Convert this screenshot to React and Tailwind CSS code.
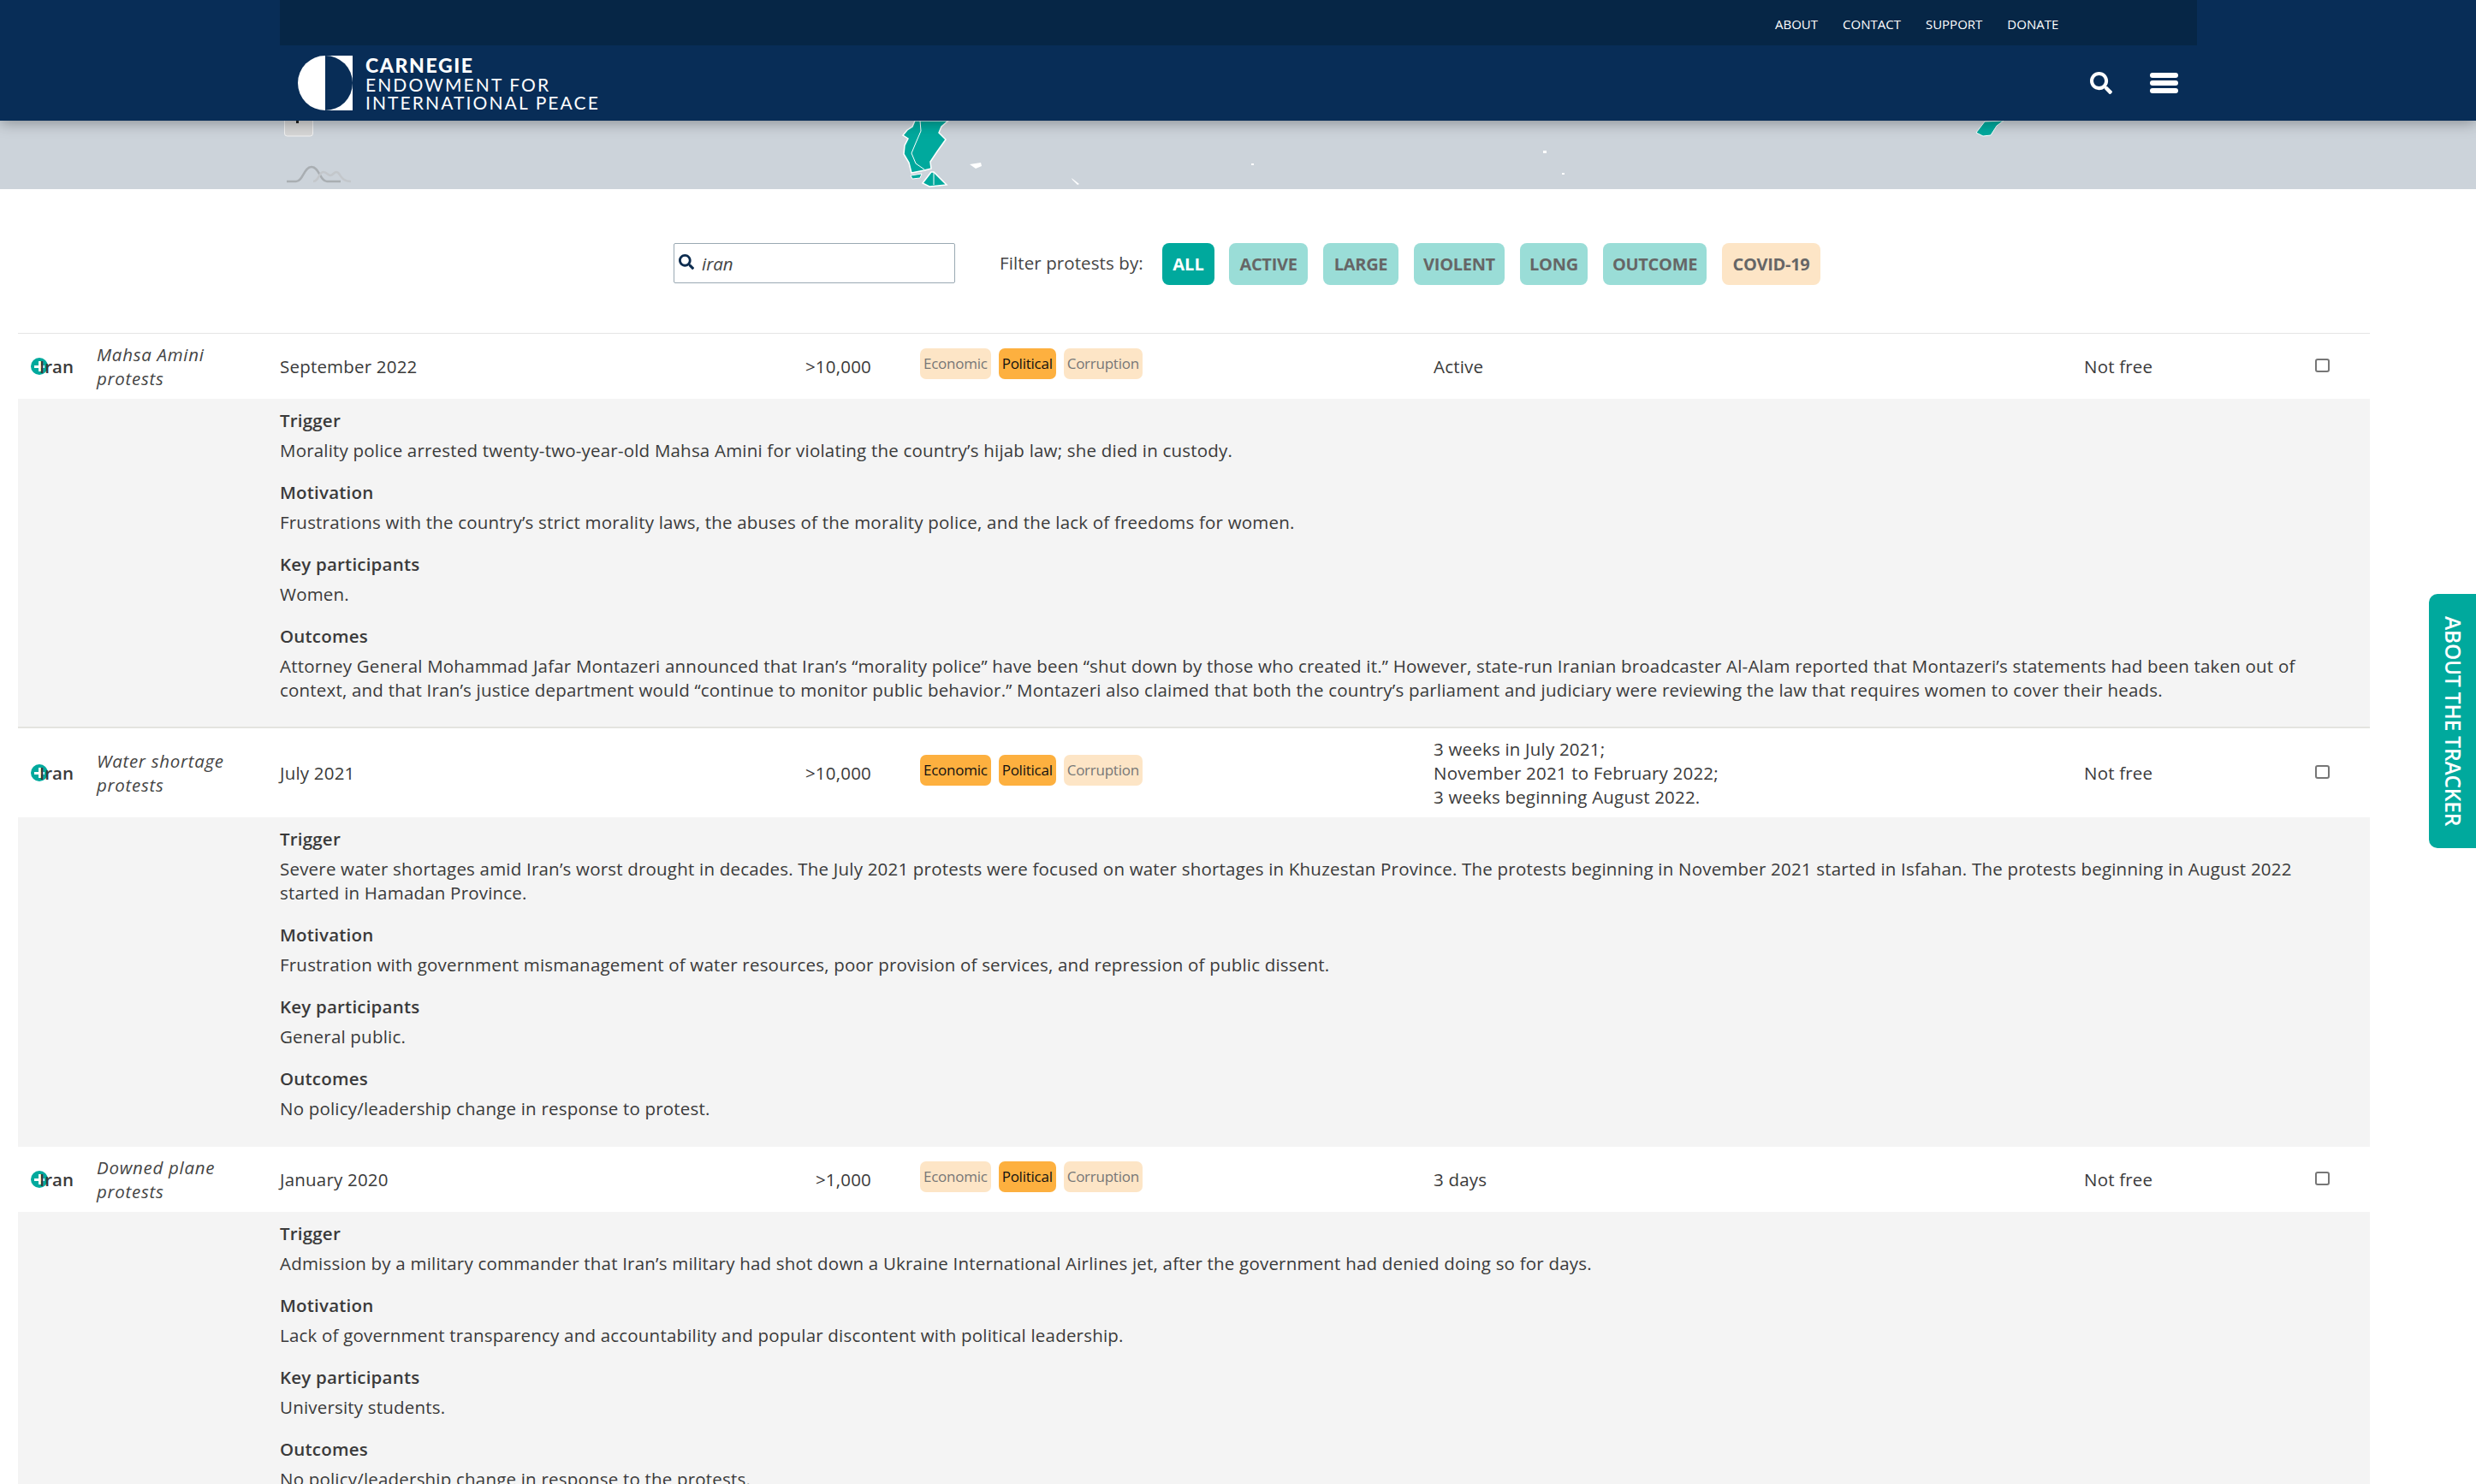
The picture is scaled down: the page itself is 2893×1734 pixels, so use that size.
import { FaSearch } from 'react-icons/fa'

const NAV = ['About', 'Contact', 'Support', 'Donate']
const FILTERS = [
  { label: 'ACTIVE', cls: 'w-[92px]' },
  { label: 'LARGE', cls: 'w-[88px]' },
  { label: 'VIOLENT', cls: 'w-[106px]' },
  { label: 'LONG', cls: 'w-[79px]' },
  { label: 'OUTCOME', cls: 'w-[121px]' },
]

const PROTESTS = [
  {
    name: 'Mahsa Amini protests',
    date: 'September 2022',
    size: '>10,000',
    on: ['Political'],
    status: ['Active'],
    details: [
      ['Trigger', 'Morality police arrested twenty-two-year-old Mahsa Amini for violating the country’s hijab law; she died in custody.'],
      ['Motivation', 'Frustrations with the country’s strict morality laws, the abuses of the morality police, and the lack of freedoms for women.'],
      ['Key participants', 'Women.'],
      ['Outcomes', 'Attorney General Mohammad Jafar Montazeri announced that Iran’s “morality police” have been “shut down by those who created it.” However, state-run Iranian broadcaster Al-Alam reported that Montazeri’s statements had been taken out of context, and that Iran’s justice department would “continue to monitor public behavior.” Montazeri also claimed that both the country’s parliament and judiciary were reviewing the law that requires women to cover their heads.'],
    ],
  },
  {
    name: 'Water shortage protests',
    date: 'July 2021',
    size: '>10,000',
    on: ['Economic', 'Political'],
    status: ['3 weeks in July 2021;', 'November 2021 to February 2022;', '3 weeks beginning August 2022.'],
    details: [
      ['Trigger', 'Severe water shortages amid Iran’s worst drought in decades. The July 2021 protests were focused on water shortages in Khuzestan Province. The protests beginning in November 2021 started in Isfahan. The protests beginning in August 2022 started in Hamadan Province.'],
      ['Motivation', 'Frustration with government mismanagement of water resources, poor provision of services, and repression of public dissent.'],
      ['Key participants', 'General public.'],
      ['Outcomes', 'No policy/leadership change in response to protest.'],
    ],
  },
  {
    name: 'Downed plane protests',
    date: 'January 2020',
    size: '>1,000',
    on: ['Political'],
    status: ['3 days'],
    details: [
      ['Trigger', 'Admission by a military commander that Iran’s military had shot down a Ukraine International Airlines jet, after the government had denied doing so for days.'],
      ['Motivation', 'Lack of government transparency and accountability and popular discontent with political leadership.'],
      ['Key participants', 'University students.'],
      ['Outcomes', 'No policy/leadership change in response to the protests.'],
    ],
  },
]

function Logo() {
  return (
    <svg width="64" height="64" viewBox="0 0 64 64" className="shrink-0">
      <rect x="32" y="0" width="32" height="64" fill="#fff" />
      <path d="M32 0A32 32 0 0 0 32 64Z" fill="#fff" />
      <path d="M32 0A32 32 0 0 1 32 64Z" fill="#082d57" />
    </svg>
  )
}

function Bars() {
  return (
    <svg width="33" height="24" viewBox="0 0 33 24">
      <rect x="0" y="0" width="33" height="6" rx="3" fill="#fff" />
      <rect x="0" y="9" width="33" height="6" rx="3" fill="#fff" />
      <rect x="0" y="18" width="33" height="6" rx="3" fill="#fff" />
    </svg>
  )
}

function MapStrip() {
  return (
    <div className="h-[80px] bg-[#ccd3da]">
      <svg width="2893" height="80" viewBox="0 0 2893 80" className="block">
        <rect x="332.5" y="-8" width="33" height="26" rx="3" fill="#d6d6d6" stroke="#f2f2f2" strokeWidth="1" />
        <rect x="346" y="0" width="3" height="3" fill="#222" />
        <path d="M335 71H346C354 71 355 54 364 54C373 54 374 71 382 71H398" fill="none" stroke="#a9aeb2" strokeWidth="2.5" />
        <path d="M366 71C373 71 372 60 378 60C382 60 383 64 386 64C389 64 390 60 393 60C398 60 397 71 410 71" fill="none" stroke="#c3c7cb" strokeWidth="2.5" />
        <path d="M1069 0L1066 7L1060 11L1055 17L1061 21L1057 29L1056 39L1062 49L1065 61L1080 58L1088 56L1087 48L1095 36L1105 22L1097 14L1100 7L1108 0Z" fill="#00a99d" stroke="#fff" strokeWidth="1.5" />
        <path d="M1075 0L1076 12L1070 26L1065 38L1070 50L1080 57" fill="none" stroke="#fff" strokeWidth="1" />
        <path d="M1064 64L1077 62L1075 67L1066 68Z" fill="#00a99d" stroke="#fff" strokeWidth="1" />
        <path d="M1078 73L1088 60L1091 60L1106 75L1086 77Z" fill="#00a99d" stroke="#fff" strokeWidth="1.5" />
        <path d="M1091 60V75" stroke="#fff" strokeWidth="1" />
        <path d="M1133 51L1146 49L1147 53L1140 56Z" fill="#fff" />
        <path d="M1252 67L1261 74L1259 75L1253 69Z" fill="#fff" />
        <rect x="1462" y="50" width="3" height="2" fill="#fff" />
        <rect x="1803" y="35" width="4" height="3" fill="#fff" />
        <rect x="1825" y="61" width="3" height="2" fill="#fff" />
        <path d="M2309 14L2319 1L2341 0L2333 6L2326 17L2317 18Z" fill="#00a99d" stroke="#fff" strokeWidth="1" />
      </svg>
    </div>
  )
}

function Tag({ label, on }) {
  const cls = on ? 'bg-[#fdb03f] text-[#111]' : 'bg-[#fde5c6] text-[#777]'
  return <span className={`h-[36px] px-[4px] rounded-[7px] flex items-center text-[17px] tracking-[-0.25px] ${cls}`}>{label}</span>
}

function Protest({ item, first }) {
  return (
    <div>
      <div className={`grid grid-cols-[92px_214px_691px_657px_760px_270px_64px] items-center py-[10px] bg-white text-[20.5px] leading-[28px] tracking-[0.2px] text-[#3a3a3a] ${first ? 'border-t border-[#e5e5e5]' : ''}`}>
        <div className="relative pl-[25px] font-semibold tracking-normal">
          <span className="absolute left-[15px] top-[4px] w-[20px] h-[20px] rounded-full bg-[#00a99d] flex items-center justify-center">
            <span className="absolute w-[12px] h-[3px] bg-white" />
            <span className="absolute w-[3px] h-[12px] bg-white" />
          </span>
          <span className="relative">Iran</span>
        </div>
        <div className="italic text-[#444] tracking-[0.7px] pr-[40px]">{item.name}</div>
        <div className="flex justify-between">
          <span>{item.date}</span>
          <span>{item.size}</span>
        </div>
        <div className="flex items-center mb-[6px] pl-[57px] gap-[9px]">
          <Tag label="Economic" on={item.on.includes('Economic')} />
          <Tag label="Political" on={item.on.includes('Political')} />
          <Tag label="Corruption" on={false} />
        </div>
        <div>
          {item.status.map(s => <div key={s}>{s}</div>)}
        </div>
        <div>Not free</div>
        <div>
          <span className="block w-[17px] h-[16px] rounded-[3px] border-2 border-[#767676] bg-white mb-[2px]" />
        </div>
      </div>
      <div className="bg-[#f4f4f4] pl-[306px] pr-[60px] pt-[11px] pb-[29px] text-[20.5px] leading-[28px] tracking-[0.2px] text-[#3a3a3a]">
        {item.details.map(([head, body]) => (
          <div key={head} className="mb-[21px] last:mb-0">
            <div className="font-semibold mb-[7px]">{head}</div>
            <p>{body}</p>
          </div>
        ))}
      </div>
    </div>
  )
}

export default function App() {
  return (
    <div className="relative h-[1734px] overflow-hidden bg-white font-['Open_Sans',sans-serif]">
      <header className="relative z-10 h-[141px] bg-[#082d57] shadow-[0_2px_16px_rgba(0,0,0,0.35)]">
        <div className="ml-[327px] w-[2240px]">
          <div className="h-[53px] bg-[#062646] flex items-center pt-[4px] pl-[1747px] gap-[29px] text-white text-[15px] uppercase">
            {NAV.map(n => <a key={n}>{n}</a>)}
          </div>
          <div className="h-[88px] flex items-center pl-[21px] pr-[22px]">
            <Logo />
            <div className="ml-[15px] text-white uppercase leading-[21px] text-[21px] tracking-[2.1px] font-['Lato',sans-serif]">
              <div className="font-black text-[23px] tracking-[1.6px] leading-[24px]">Carnegie</div>
              <div>Endowment for</div>
              <div>International Peace</div>
            </div>
            <div className="ml-auto flex items-center gap-[44px]">
              <FaSearch size={26} color="#fff" />
              <Bars />
            </div>
          </div>
        </div>
      </header>
      <MapStrip />

      <div className="flex items-start pt-[63px] pl-[787px] h-[168px]">
        <div className="w-[329px] h-[47px] border border-[#9aa9b3] rounded-[2px] flex items-center pl-[5px] gap-[9px]">
          <FaSearch size={18} color="#0d2c4f" className="mb-[3px]" />
          <span className="italic text-[20.5px] text-[#444] mt-[2px]">iran</span>
        </div>
        <span className="ml-[52px] w-[190px] mt-[8px] text-[20.5px] tracking-[0.1px] text-[#444]">Filter protests by:</span>
        <span className="w-[61px] h-[49px] rounded-[8px] bg-[#00a99d] text-white font-bold text-[20px] flex items-center justify-center">ALL</span>
        <div className="flex gap-[18px] ml-[17px]">
          {FILTERS.map(f => (
            <span key={f.label} className={`${f.cls} h-[49px] rounded-[8px] bg-[#9addd7] text-[#666] font-bold text-[20px] tracking-[-0.3px] flex items-center justify-center`}>{f.label}</span>
          ))}
          <span className="w-[115px] h-[49px] rounded-[8px] bg-[#fde5c6] text-[#666] font-bold text-[20px] tracking-[-0.3px] flex items-center justify-center">COVID-19</span>
        </div>
      </div>

      <div className="ml-[21px] w-[2748px]">
        <Protest item={PROTESTS[0]} first />
        <div className="border-t-2 border-[#e4e4df]">
          <Protest item={PROTESTS[1]} />
        </div>
        <div className="border-t-2 border-[#f4f4f4]">
          <Protest item={PROTESTS[2]} />
        </div>
      </div>

      <div className="absolute right-0 top-[694px] w-[55px] h-[297px] rounded-l-[10px] bg-[#00a99d] flex items-center justify-center">
        <span className="[writing-mode:vertical-rl] text-white font-semibold text-[24.5px] tracking-[-0.2px] whitespace-nowrap">ABOUT THE TRACKER</span>
      </div>
    </div>
  )
}
